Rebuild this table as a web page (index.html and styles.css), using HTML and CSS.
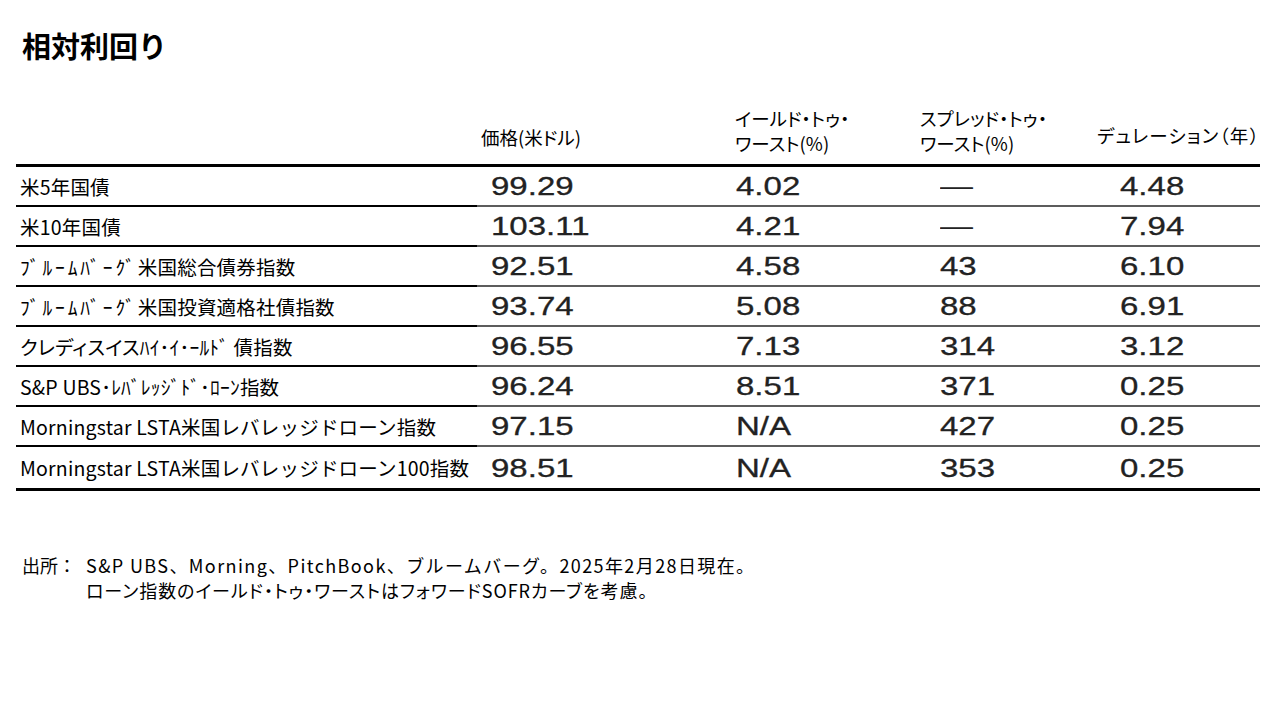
FILE: index.html
```html
<!DOCTYPE html>
<html lang="ja">
<head>
<meta charset="utf-8">
<title>相対利回り</title>
<link rel="stylesheet" href="styles.css">
</head>
<body>
<div class="page">
  <h1 class="title">相対利回り</h1>
  <div class="table">
    <div class="row head">
      <div class="hc h-label"></div>
      <div class="hc h-price">価格(米ドル)</div>
      <div class="hc h-yield">イールド・トゥ・<br>ワースト(%)</div>
      <div class="hc h-spread">スプレッド・トゥ・<br>ワースト(%)</div>
      <div class="hc h-dur">デュレーション（年）</div>
    </div>
    <div class="row body">
      <div class="c label">米5年国債</div>
      <div class="c price"><span class="n">99.29</span></div>
      <div class="c yield"><span class="n">4.02</span></div>
      <div class="c spread"><span class="n dash">—</span></div>
      <div class="c dur"><span class="n">4.48</span></div>
    </div>
    <div class="row body">
      <div class="c label">米10年国債</div>
      <div class="c price"><span class="n">103.11</span></div>
      <div class="c yield"><span class="n">4.21</span></div>
      <div class="c spread"><span class="n dash">—</span></div>
      <div class="c dur"><span class="n">7.94</span></div>
    </div>
    <div class="row body">
      <div class="c label"><span class="hw">ﾌﾞﾙｰﾑﾊﾞｰｸﾞ</span>米国総合債券指数</div>
      <div class="c price"><span class="n">92.51</span></div>
      <div class="c yield"><span class="n">4.58</span></div>
      <div class="c spread"><span class="n">43</span></div>
      <div class="c dur"><span class="n">6.10</span></div>
    </div>
    <div class="row body">
      <div class="c label"><span class="hw">ﾌﾞﾙｰﾑﾊﾞｰｸﾞ</span>米国投資適格社債指数</div>
      <div class="c price"><span class="n">93.74</span></div>
      <div class="c yield"><span class="n">5.08</span></div>
      <div class="c spread"><span class="n">88</span></div>
      <div class="c dur"><span class="n">6.91</span></div>
    </div>
    <div class="row body">
      <div class="c label"><span class="pk">クレディスイス</span>ﾊｲ･ｲ･ｰﾙﾄﾞ 債指数</div>
      <div class="c price"><span class="n">96.55</span></div>
      <div class="c yield"><span class="n">7.13</span></div>
      <div class="c spread"><span class="n">314</span></div>
      <div class="c dur"><span class="n">3.12</span></div>
    </div>
    <div class="row body">
      <div class="c label">S&amp;P UBS･ﾚﾊﾞﾚｯｼﾞﾄﾞ･ﾛｰﾝ指数</div>
      <div class="c price"><span class="n">96.24</span></div>
      <div class="c yield"><span class="n">8.51</span></div>
      <div class="c spread"><span class="n">371</span></div>
      <div class="c dur"><span class="n">0.25</span></div>
    </div>
    <div class="row body">
      <div class="c label">Morningstar LSTA米国レバレッジドローン指数</div>
      <div class="c price"><span class="n">97.15</span></div>
      <div class="c yield"><span class="n">N/A</span></div>
      <div class="c spread"><span class="n">427</span></div>
      <div class="c dur"><span class="n">0.25</span></div>
    </div>
    <div class="row body last">
      <div class="c label">Morningstar LSTA米国レバレッジドローン100指数</div>
      <div class="c price"><span class="n">98.51</span></div>
      <div class="c yield"><span class="n">N/A</span></div>
      <div class="c spread"><span class="n">353</span></div>
      <div class="c dur"><span class="n">0.25</span></div>
    </div>
  </div>
  <div class="note">
    <div class="note-label">出所：</div>
    <div class="note-text">
      <div class="note-l1">S&amp;P UBS、Morning、PitchBook、ブルームバーグ。2025年2月28日現在。</div>
      <div class="note-l2">ローン指数のイールド・トゥ・ワーストはフォワードSOFRカーブを考慮。</div>
    </div>
  </div>
</div>
</body>
</html>
```

FILE: styles.css
```css
* { box-sizing: border-box; }
html, body { margin: 0; padding: 0; background: #fff; }
body {
  width: 1280px;
  height: 720px;
  overflow: hidden;
  font-family: "Noto Sans CJK JP", "Noto Sans", sans-serif;
  color: #000;
}
.page { padding-top: 27px; }
.title {
  margin: 0 0 0 22px;
  font-size: 29px;
  line-height: 36px;
  font-weight: 700;
}
.table {
  margin-left: 16px;
  width: 1244px;
  border-bottom: 3px solid #000;
}
.row {
  display: grid;
  grid-template-columns: 461px 258px 185px 177px 163px;
}
.head {
  height: 104px;
  border-bottom: 3px solid #000;
  align-items: end;
}
.hc {
  font-size: 18.5px;
  line-height: 25px;
  font-feature-settings: "palt";
  white-space: nowrap;
}
.h-price { padding-left: 4px; padding-bottom: 14px; }
.h-yield { padding-bottom: 8px; }
.h-spread { padding-bottom: 8px; }
.h-dur { padding-bottom: 16px; letter-spacing: 1.2px; }
.body .c {
  height: 40px;
  display: flex;
  align-items: center;
  border-bottom: 2px solid #5c5c5c;
  white-space: nowrap;
}
.body .label {
  border-bottom-color: #000;
  padding-left: 4px;
  font-size: 19.5px;
  letter-spacing: 0.2px;
}
.hw { letter-spacing: 2.9px; }
.pk { font-feature-settings: "palt"; }
.body.last .c { border-bottom: none; height: 41px; }
.price { padding-left: 14px; }
.yield { padding-left: 1px; }
.spread { padding-left: 20px; }
.dur { padding-left: 23px; }
.n {
  display: inline-block;
  font-family: "Liberation Sans", Arial, sans-serif;
  font-size: 26px;
  line-height: 30px;
  color: #222;
  transform: scaleX(1.27);
  transform-origin: left center;
  -webkit-text-stroke: 0.3px #222;
}
.dash { -webkit-text-stroke: 0; }
.note {
  display: flex;
  margin-top: 62px;
  padding-left: 22px;
  font-size: 18px;
  line-height: 25px;
}
.note-label { width: 64px; flex: none; }
.note-l1 { letter-spacing: 1.4px; }
.note-l2 { font-feature-settings: "palt"; letter-spacing: 0.95px; }
```
